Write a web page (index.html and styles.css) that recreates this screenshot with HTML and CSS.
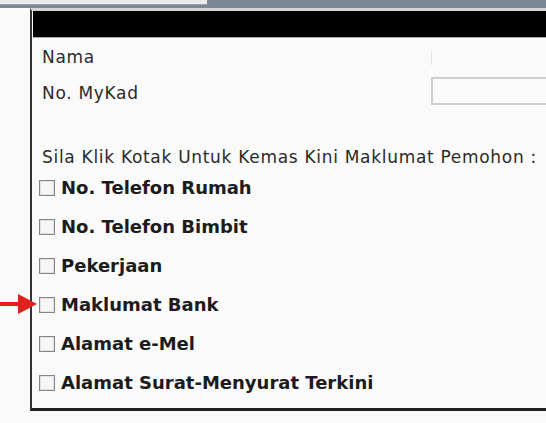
FILE: index.html
```html
<!DOCTYPE html>
<html>
<head>
<meta charset="utf-8">
<link rel="stylesheet" href="styles.css">
</head>
<body>
<div class="topbar"><div class="tab"></div></div>
<div class="stage">
  <svg class="arrow" width="40" height="22" viewBox="0 0 40 22">
    <rect x="0" y="9" width="22" height="4" fill="#e3211c"/>
    <polygon points="18,1 37,11 18,21" fill="#e3211c"/>
  </svg>
  <div class="box">
    <div class="header"></div>
    <div class="form">
      <div class="row row-nama">
        <span class="label">Nama</span>
        <span class="faint"></span>
      </div>
      <div class="row row-kad">
        <span class="label">No. MyKad</span>
        <span class="input"></span>
      </div>
      <div class="row row-info">
        <span class="label">Sila Klik Kotak Untuk Kemas Kini Maklumat Pemohon :</span>
      </div>
      <div class="check"><span class="cb"></span><span class="opt">No. Telefon Rumah</span></div>
      <div class="check"><span class="cb"></span><span class="opt">No. Telefon Bimbit</span></div>
      <div class="check"><span class="cb"></span><span class="opt">Pekerjaan</span></div>
      <div class="check"><span class="cb"></span><span class="opt">Maklumat Bank</span></div>
      <div class="check"><span class="cb"></span><span class="opt">Alamat e-Mel</span></div>
      <div class="check"><span class="cb"></span><span class="opt">Alamat Surat-Menyurat Terkini</span></div>
    </div>
  </div>
</div>
</body>
</html>
```

FILE: styles.css
```css
html, body {
  margin: 0;
  padding: 0;
  background: #fafafa;
  overflow: hidden;
}
body {
  width: 546px;
  height: 423px;
  font-family: "DejaVu Sans", Verdana, sans-serif;
  color: #2a2a2a;
}
.topbar {
  height: 8px;
  background: #7c8898;
}
.tab {
  width: 207px;
  height: 4px;
  background: #e8ebee;
  border-bottom: 1px solid #9aa2ac;
}
.stage {
  position: relative;
  padding-left: 30px;
}
.arrow {
  position: absolute;
  left: 0;
  top: 285px;
}
.box {
  border-left: 2px solid #333;
  border-bottom: 3px solid #222;
  border-top: 3px solid #d4d4d4;
  height: 403px;
  box-sizing: border-box;
}
.header {
  margin-left: 1px;
  height: 26px;
  background: #000;
  border-bottom: 1px solid #a8a8a8;
}
.form {
  padding-left: 8px;
  display: flex;
  flex-direction: column;
}
.row {
  display: flex;
  align-items: center;
  position: relative;
}
.label {
  font-size: 17px;
  letter-spacing: 0.7px;
  margin-left: 2px;
}
.row-nama {
  height: 38px;
}
.faint {
  position: absolute;
  left: 391px;
  top: 14px;
  width: 1px;
  height: 13px;
  background: #e4e6d8;
}
.row-kad {
  height: 34px;
}
.input {
  position: absolute;
  left: 391px;
  top: 1px;
  width: 140px;
  height: 28px;
  border: 2px solid #cfcfcf;
  border-right: 0;
  box-sizing: border-box;
  background: #fbfbfb;
}
.row-info {
  height: 58px;
  align-items: flex-end;
}
.row-info .label {
  line-height: 22px;
}
.check {
  display: flex;
  align-items: center;
  height: 39px;
}
.cb {
  width: 16px;
  height: 16px;
  border: 1px solid #858585;
  box-shadow: inset 0 0 0 1px #e2e2e2;
  background: #f6f6f6;
  box-sizing: border-box;
  margin-right: 6px;
  margin-left: -1px;
  flex: none;
}
.opt {
  font-size: 18px;
  font-weight: bold;
  color: #1c1c1c;
}
```
